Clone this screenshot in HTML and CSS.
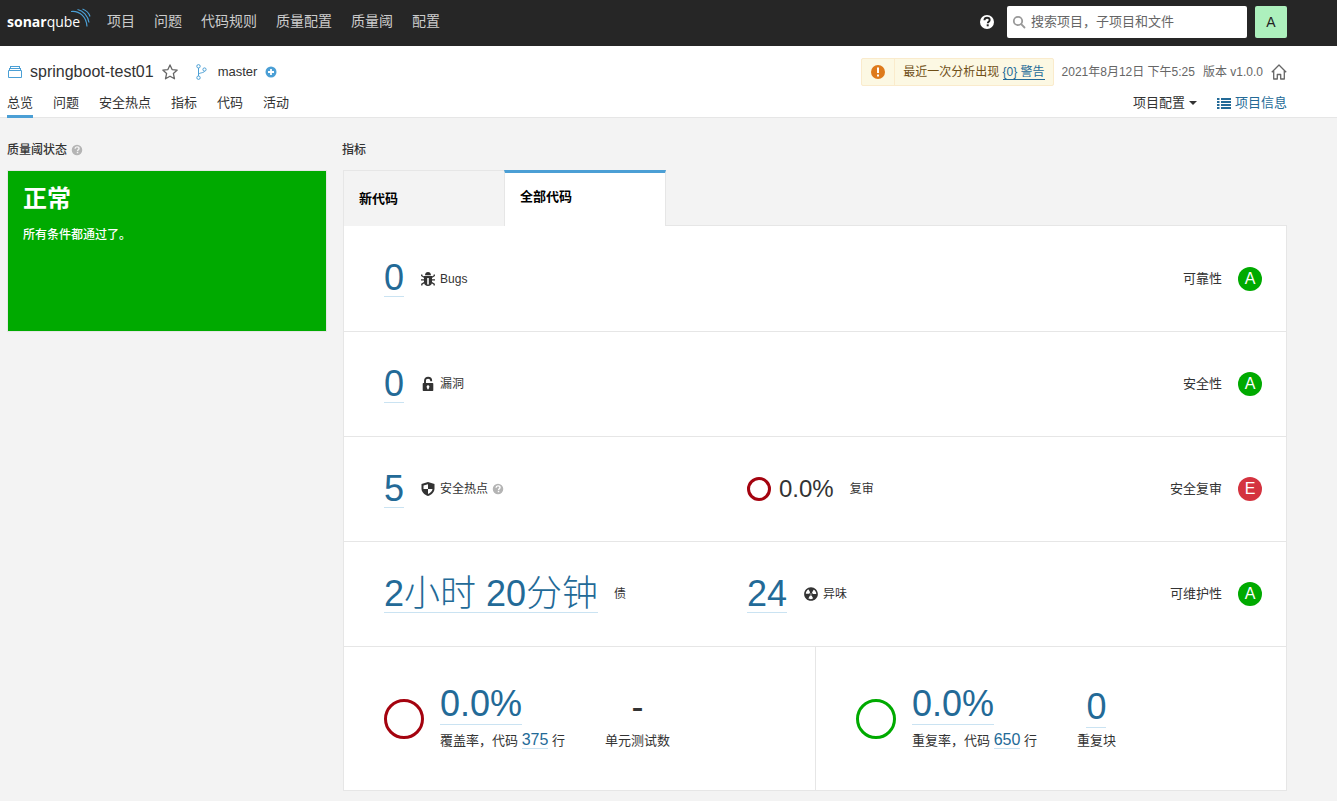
FILE: index.html
```html
<!DOCTYPE html>
<html lang="zh-CN">
<head>
<meta charset="utf-8">
<title>springboot-test01</title>
<link rel="stylesheet" href="styles.css">
</head>
<body>
<svg class="defs" aria-hidden="true">
  <symbol id="help" viewBox="0 0 16 16"><circle cx="8" cy="8" r="7" fill="currentColor"/><path class="cut" d="M5.4 6.3C5.5 4.6 6.5 3.8 8 3.8s2.7.9 2.7 2.2c0 1.700-1.900 1.800-1.900 3.200" fill="none" stroke-width="1.900"/><path class="cut" d="M8.700 10.300v2" fill="none" stroke-width="2"/></symbol>
</svg>
<header class="topbar">
  <a class="logo" href="#" aria-label="sonarqube"><span><b>sonar</b>qube</span>
    <svg class="waves" viewBox="0 0 20 20" fill="none" stroke="#4b9fd5" stroke-width="1.200"><path d="M0 3.500C9 2.500 15.500 9 16 18.500M6.500 1.500C12 2.500 17 8 18 14.500M11.500 1C15.500 2.500 18 5 19 8.500"/></svg>
  </a>
  <nav class="mainnav" aria-label="主导航">
    <a href="#">项目</a><a href="#">问题</a><a href="#">代码规则</a><a href="#">质量配置</a><a href="#">质量阈</a><a href="#">配置</a>
  </nav>
  <button class="plain helpbtn" type="button" aria-label="帮助"><svg class="i16"><use href="#help"/></svg></button>
  <label class="search">
    <svg class="i16" viewBox="0 0 16 16" fill="none" stroke="#999" stroke-width="1.800"><circle cx="7" cy="7" r="4.200"/><path d="M10.200 10.200l3.300 3.300" stroke-linecap="round"/></svg>
    <input type="search" placeholder="搜索项目，子项目和文件" aria-label="搜索">
  </label>
  <button class="avatar" type="button">A</button>
</header>

<div class="context">
  <div class="project">
    <svg class="i16 blue" viewBox="0 0 16 16" fill="none" stroke="currentColor"><path d="M1.500 6.500h13v7h-13zM2 4.500h12M3 2.500h10M2.500 4v2M13.500 4v2M3.500 2v2M12.500 2v2" /></svg>
    <h1><a href="#">springboot-test01</a></h1>
    <button class="plain star" type="button" aria-label="收藏"><svg class="i16" viewBox="0 0 16 16" fill="none" stroke="#666" stroke-width="1.300" stroke-linejoin="round"><path d="M8 .9l2.100 4.700 5.100.5-3.800 3.500 1.100 5.200L8 12.200l-4.500 2.600 1.100-5.200L.8 6.100l5.100-.5z"/></svg></button>
    <svg class="i16 blue branch" viewBox="0 0 16 16" fill="none" stroke="currentColor"><circle cx="4.500" cy="2.300" r="1.700"/><circle cx="4.500" cy="13.700" r="1.700"/><circle cx="10.500" cy="5.500" r="1.600"/><path d="M4.500 4v8M10.500 7.100c0 2-6 1.400-6 3.600"/></svg>
    <a class="master" href="#">master</a>
    <button class="plain plus" type="button" aria-label="分支"><svg class="i12 blue" viewBox="0 0 12 12"><circle cx="6" cy="6" r="5.500" fill="currentColor"/><path d="M6 3v6M3 6h6" stroke="#fff" stroke-width="1.800"/></svg></button>
    <div class="meta">
      <div class="alert"><span class="alerticon"><svg class="i16" viewBox="0 0 16 16"><circle cx="8" cy="8" r="7" fill="#de7a1c"/><path d="M8 3.500v5.500M8 10.500v2" stroke="#fff" stroke-width="2"/></svg></span><span class="alerttext">最近一次分析出现 <a href="#">{0} 警告</a></span></div>
      <time>2021年8月12日 下午5:25</time><span>版本 v1.0.0</span>
      <button class="plain" type="button" aria-label="主页"><svg class="i16" viewBox="0 0 16 16" fill="none" stroke="#666" stroke-width="1.300" stroke-linejoin="round"><path d="M.8 8.200L8 1l7.200 7.200M2.700 7v8h3.600v-4.500h3.400V15h3.600V7"/></svg></button>
    </div>
  </div>
  <nav class="tabs" aria-label="项目导航">
    <a class="on" href="#">总览</a><a href="#">问题</a><a href="#">安全热点</a><a href="#">指标</a><a href="#">代码</a><a href="#">活动</a>
    <button class="plain config" type="button">项目配置<svg class="caret" viewBox="0 0 8 4"><path d="M0 0h8L4 4z" fill="#333"/></svg></button>
    <a class="info" href="#"><svg class="i14" viewBox="0 0 14 14" fill="none" stroke="currentColor" stroke-width="2"><path d="M0 3h2.500M4 3h10M0 6h2.500M4 6h10M0 9h2.500M4 9h10M0 12h2.500M4 12h10"/></svg>项目信息</a>
  </nav>
</div>

<main class="page">
  <section class="gate">
    <h2>质量阈状态 <svg class="i12 hint"><use href="#help"/></svg></h2>
    <div class="status"><strong>正常</strong><p>所有条件都通过了。</p></div>
  </section>
  <section class="measures">
    <h2>指标</h2>
    <div class="codetabs" role="tablist">
      <button type="button" role="tab" aria-selected="false">新代码</button>
      <button type="button" role="tab" aria-selected="true">全部代码</button>
    </div>
    <div class="panel">
      <div class="row">
        <div class="metric"><a class="big" href="#">0</a><span class="label"><svg class="i16" viewBox="0 0 16 16"><path d="M5 4.300C5 2.200 6.300 1 8 1s3 1.200 3 3.300zM4 5h8v6.500C12 13.600 10.200 15 8 15s-4-1.400-4-3.500z" fill="#333"/><path d="M1.700 3.500v1.200L4.500 6.500M14.300 3.500v1.200l-2.800 1.800M1 8.800h3.500M15 8.800h-3.500M1.800 14.500v-1.300l2.900-2M14.200 14.500v-1.300l-2.900-2" fill="none" stroke="#333" stroke-width="1.300"/><path d="M8 7v6.500" stroke="#fff" stroke-width="1.600"/></svg>Bugs</span></div>
        <div class="rating">可靠性<b class="badge">A</b></div>
      </div>
      <div class="row">
        <div class="metric"><a class="big" href="#">0</a><span class="label"><svg class="i16" viewBox="0 0 16 16"><path d="M5 7.500V4.700C5 2.900 6.300 1.800 8.100 1.800s3.100 1.100 3.100 2.900v.5" fill="none" stroke="#333" stroke-width="1.900"/><path fill="#333" fill-rule="evenodd" d="M3.500 7h9q.8 0 .8.800v6.400q0 .8-.8.800h-9q-.8 0-.8-.8V7.800q0-.8.8-.8zM8 9.200a1.500 1.500 0 0 0-.8 2.700V13.300h1.600v-1.400A1.500 1.500 0 0 0 8 9.200z"/></svg>漏洞</span></div>
        <div class="rating">安全性<b class="badge">A</b></div>
      </div>
      <div class="row">
        <div class="metric"><a class="big" href="#">5</a><span class="label"><svg class="i16" viewBox="0 0 16 16"><path d="M8 1l6.500 2v4.500c0 3.500-2.700 6-6.500 7.500-3.800-1.500-6.500-4-6.500-7.500V3z" fill="#333"/><path d="M8 3.300V8H3.500V4.500zM8 8h4.500c-.2 2.200-1.800 3.700-4.500 5z" fill="#fff"/></svg>安全热点 <svg class="i12 hint onwhite"><use href="#help"/></svg></span></div>
        <div class="metric"><i class="ring small"></i><span class="mid">0.0%</span><span class="label">复审</span></div>
        <div class="rating">安全复审<b class="badge bad">E</b></div>
      </div>
      <div class="row">
        <div class="metric"><a class="big" href="#">2小时 20分钟</a><span class="label">债</span></div>
        <div class="metric"><a class="big" href="#">24</a><span class="label"><svg class="i16" viewBox="1 1 14 14"><path fill="#333" d="M8 2C4.700 2 2 4.700 2 8s2.700 6 6 6 6-2.700 6-6-2.700-6-6-6zm-.5 5.500h.9v.9h-.9v-.9zm-3.800.2c-.1 0-.2-.1-.2-.2 0-.4.1-1.200.6-2S5.300 4.200 5.600 4c.2 0 .3 0 .3.1l1.300 2.300c0 .1 0 .2-.1.2-.1.2-.2.3-.3.5-.1.2-.2.4-.2.5 0 .1-.1.2-.2.2l-2.700-.1zM9.900 12c-.3.2-1.100.5-2 .5-.9 0-1.700-.3-2-.5-.1 0-.1-.2-.1-.3l1.300-2.300c0-.1.1-.1.2-.1.2.1.3.1.5.1s.4 0 .5-.1c.1 0 .2 0 .2.1l1.300 2.300c.2.2.2.3.1.3zm2.500-4.100L9.700 8c-.1 0-.2-.1-.2-.2 0-.2-.1-.4-.2-.5 0-.1-.2-.3-.3-.4-.1 0-.1-.1-.1-.2l1.300-2.300c.1-.1.2-.1.3-.1.3.2 1 .7 1.500 1.500s.6 1.600.6 2c0 0-.1.1-.2.1z"/></svg>异味</span></div>
        <div class="rating">可维护性<b class="badge">A</b></div>
      </div>
      <div class="bottom">
        <div class="half">
          <i class="ring"></i>
          <div class="stat"><a class="big" href="#">0.0%</a><p>覆盖率，代码 <a href="#">375</a> 行</p></div>
          <div class="stat side"><span class="big none">-</span><p>单元测试数</p></div>
        </div>
        <div class="half">
          <i class="ring good"></i>
          <div class="stat"><a class="big" href="#">0.0%</a><p>重复率，代码 <a href="#">650</a> 行</p></div>
          <div class="stat side"><a class="big" href="#">0</a><p>重复块</p></div>
        </div>
      </div>
    </div>
  </section>
</main>
</body>
</html>
```
FILE: styles.css
```css
* { box-sizing: border-box; }
body { margin: 0; background: #f3f3f3; color: #333; font: 13px/20px "Liberation Sans", "Noto Sans CJK SC", sans-serif; }
a { color: inherit; text-decoration: none; }
h1, h2, p { margin: 0; font-weight: 400; }
svg { display: block; flex: none; }
.defs { position: absolute; width: 0; height: 0; }
.i16 { width: 16px; height: 16px; }
.i14 { width: 14px; height: 14px; }
.i12 { width: 12px; height: 12px; }
.blue { color: #4b9fd5; }
.cut { stroke: var(--cut, #262626); }
.plain { border: 0; padding: 0; background: none; font: inherit; color: inherit; cursor: pointer; }

.topbar { display: flex; align-items: center; height: 46px; padding: 0 50px 2px 7px; background: #262626; }
.logo { display: flex; width: 82px; color: #fff; font: 400 14px/20px "Open Sans", sans-serif; }
.logo b { font-weight: 700; }
.waves { width: 20px; height: 20px; margin: -4px 0 0 -9px; }
.mainnav { display: flex; flex: 1; gap: 19px; margin-left: 18px; padding-bottom: 2px; color: #ccc; font-size: 14px; }
.helpbtn { margin-right: 12px; color: #fff; }
.search { display: flex; align-items: center; gap: 4px; width: 240px; height: 32px; padding: 0 4px; background: #fff; border-radius: 2px; }
.search input { flex: 1; min-width: 0; padding: 0; border: 0; outline: 0; background: none; font: inherit; appearance: none; }
.search input::placeholder { color: #666; opacity: 1; }
.avatar { width: 32px; height: 32px; margin-left: 8px; padding: 0; border: 0; border-radius: 2px; background: #adf0bd; color: #222; font: 14px "Liberation Sans", sans-serif; }

.context { padding: 12px 50px 0 7px; background: #fff; border-bottom: 1px solid #e6e6e6; }
.project { display: flex; align-items: center; height: 28px; }
.project h1 { margin-left: 7px; font-size: 16px; }
.star { margin-left: 8px; }
.branch { margin-left: 16px; }
.master { margin-left: 8px; }
.plus { margin-left: 8px; }
.meta { display: flex; align-items: center; gap: 8px; margin-left: auto; color: #666; font-size: 12px; }
.alert { display: flex; height: 28px; border: 1px solid #faebcc; border-radius: 2px; background: #fcf8e3; color: #6f4f17; }
.alerticon { display: flex; align-items: center; padding: 0 8px; border-right: 1px solid #faebcc; }
.alerttext { padding: 3px 8px; }
.alerttext a { border-bottom: 1px solid #236a97; color: #236a97; }
.tabs { display: flex; gap: 20px; height: 31px; }
.tabs > * { height: 32px; padding-top: 7px; }
.tabs .on { border-bottom: 3px solid #4b9fd5; }
.tabs .config, .tabs .info { display: flex; align-items: center; gap: 4px; padding-bottom: 5px; }
.config { margin-left: auto; }
.info { color: #236a97; }
.caret { width: 8px; height: 4px; }

.page { display: grid; grid-template-columns: 320px minmax(0, 1fr); gap: 16px; padding: 22px 50px 10px 7px; }
h2 { display: flex; align-items: center; gap: 4px; height: 20px; margin-bottom: 10px; font-size: 12px; font-weight: 500; }
.hint { color: #b4b4b4; --cut: #f3f3f3; }
.onwhite { --cut: #fff; }
.status { min-height: 162px; padding: 12px 15px; border: 1px solid #e6e6e6; background: #0a0; color: #fff; }
.status strong { font-size: 24px; line-height: 32px; }
.status p { margin-top: 10px; font-size: 12px; font-weight: 500; }
.codetabs { display: flex; margin-bottom: -1px; }
.codetabs button { width: 162px; height: 56px; padding: 0 16px 2px 15px; border: solid #e6e6e6; border-width: 1px 0 0 1px; background: #f3f3f3; color: #000; font: 600 13px "Liberation Sans", "Noto Sans CJK SC", sans-serif; text-align: left; }
.codetabs [aria-selected="true"] { position: relative; margin-left: -1px; padding-bottom: 8px; border-width: 3px 1px 0; border-top-color: #4b9fd5; background: #fff; }
.panel { border: 1px solid #e6e6e6; background: #fff; }
.measures h2 { margin-left: -1px; }
.row { display: grid; grid-template-columns: 363px 1fr auto; align-items: center; height: 105px; padding: 0 24px 0 40px; border-bottom: 1px solid #e6e6e6; }
.row:first-child { height: 106px; }
.metric, .label, .rating { display: flex; align-items: center; }
.metric { gap: 16px; }
.label { gap: 4px; font-size: 12px; }
.rating { grid-column: 3; gap: 16px; }
.big { border-bottom: 1px solid #cae3f2; color: #236a97; font-size: 36px; line-height: 36px; font-weight: 300; white-space: nowrap; }
.badge { width: 24px; height: 24px; border-radius: 50%; background: #0a0; color: #fff; font: 16px/24px "Liberation Sans", sans-serif; text-align: center; }
.bad { background: #d4333f; }
.mid { margin-left: -8px; font-size: 24px; }
.ring { width: 40px; height: 40px; border: 3px solid #a4030f; border-radius: 50%; }
.ring.small { width: 24px; height: 24px; }
.ring.good { border-color: #0a0; }
.bottom { display: grid; grid-template-columns: 1fr 1fr; height: 143px; }
.half { display: flex; align-items: center; gap: 16px; padding-left: 40px; }
.half + .half { border-left: 1px solid #e6e6e6; }
.stat { display: flex; flex-direction: column; align-items: flex-start; }
.stat .big { padding-bottom: 2px; }
.stat p { margin-top: 5px; }
.stat p a { border-bottom: 1px solid #cae3f2; color: #236a97; font-size: 16px; }
.side { align-items: center; margin-left: 24px; padding-top: 2px; }
.side p { margin-top: 3px; }
.none { border-color: transparent; color: #333; }
```
